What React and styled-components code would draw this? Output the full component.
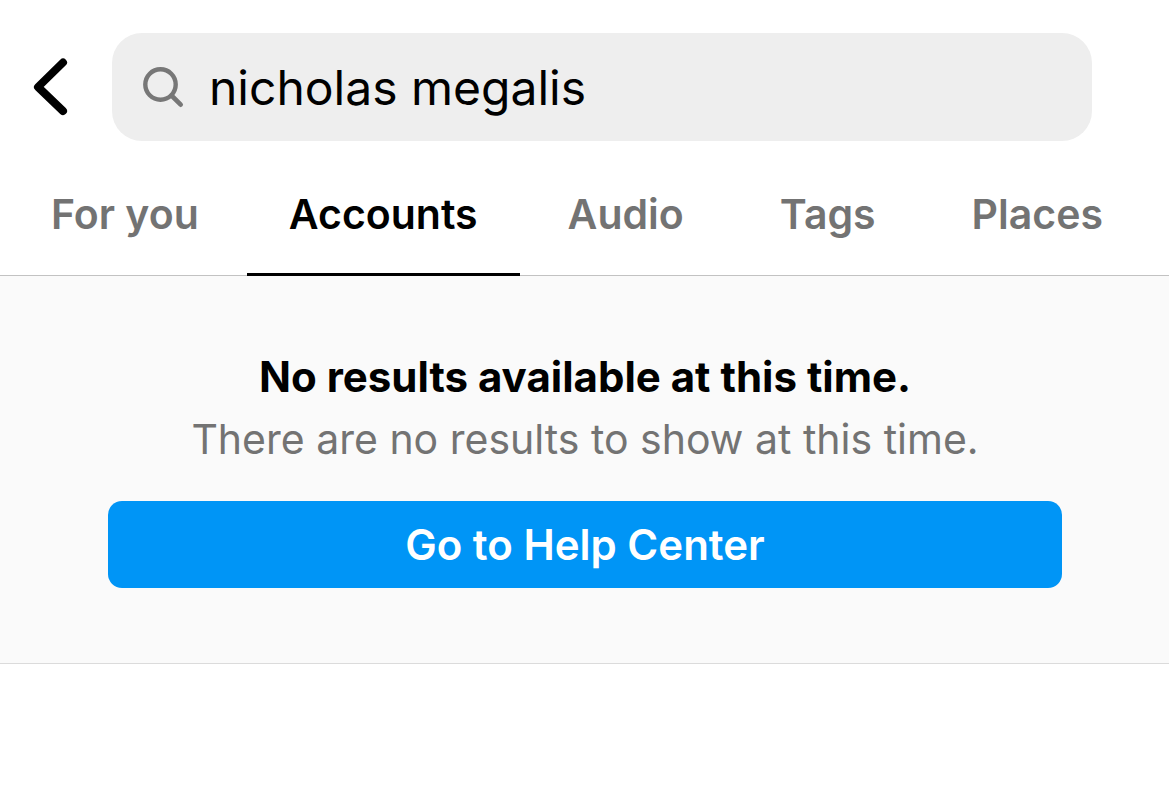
import { createGlobalStyle, styled } from 'styled-components';

const GlobalStyle = createGlobalStyle`
    *, *::before, *::after {
        box-sizing: border-box;
    }

    body {
        margin: 0;
        background: #fff;
        color: #000;
        font-family: Inter, 'Liberation Sans', sans-serif;
    }
`;

const Header = styled.header`
    display: flex;
    align-items: center;
    gap: 44px;
    padding: 33px 77px 0 32px;
`;

const BackButton = styled.button`
    flex: none;
    display: flex;
    padding: 0;
    border: 0;
    background: none;
    color: #000;
    cursor: pointer;
`;

const SearchBox = styled.label`
    flex: 1;
    min-width: 0;
    display: flex;
    align-items: center;
    gap: 24px;
    height: 108px;
    padding: 0 30px;
    border-radius: 30px;
    background: #eee;
    color: #777;
`;

const SearchInput = styled.input`
    flex: 1;
    min-width: 0;
    padding: 2px 0 0;
    border: 0;
    outline: 0;
    background: none;
    color: #000;
    font-family: inherit;
    font-size: 48px;
    line-height: 60px;
`;

const Tabs = styled.nav`
    display: flex;
    height: 135px;
    padding-left: 3px;
    box-shadow: inset 0 -1px #c2c2c2;
    overflow: hidden;
`;

const Tab = styled.button`
    flex: none;
    padding: 10px ${({ $active }) => ($active ? '42px' : '48px')} 0;
    border: 0;
    background: none;
    box-shadow: ${({ $active }) => ($active ? 'inset 0 -3px #000' : 'none')};
    color: ${({ $active }) => ($active ? '#000' : '#737373')};
    font-family: inherit;
    font-size: 41px;
    font-weight: 600;
    cursor: pointer;
`;

const Empty = styled.section`
    display: flex;
    flex-direction: column;
    padding: 69px 107px 75px 108px;
    border-bottom: 1px solid #dbdbdb;
    background: #fafafa;
    text-align: center;
`;

const EmptyTitle = styled.h1`
    margin: 0;
    font-size: 42px;
    font-weight: 700;
    line-height: 63px;
`;

const EmptyText = styled.p`
    margin: 0 0 30px;
    color: #737373;
    font-size: 41px;
    line-height: 63px;
`;

const HelpLink = styled.a`
    border-radius: 14px;
    background: #0095f6;
    color: #fff;
    font-size: 42px;
    font-weight: 600;
    line-height: 87px;
    text-decoration: none;
`;

const BackIcon = () => (
    <svg width="36" height="58" viewBox="0 0 36 58" fill="none" aria-hidden="true">
        <path
            d="M31 4.5 6 29l25 24"
            stroke="currentColor"
            strokeWidth="8"
            strokeLinecap="round"
            strokeLinejoin="round"
        />
    </svg>
);

const SearchIcon = () => (
    <svg width="43" height="44" viewBox="0 0 43 44" fill="none" aria-hidden="true">
        <circle cx="18.5" cy="19.5" r="15.2" stroke="currentColor" strokeWidth="4.4" />
        <path d="m29.5 30.5 9.2 9.2" stroke="currentColor" strokeWidth="4.6" strokeLinecap="round" />
    </svg>
);

const tabs = ['For you', 'Accounts', 'Audio', 'Tags', 'Places'];

const App = () => (
    <>
        <GlobalStyle />
        <Header>
            <BackButton type="button" aria-label="Back">
                <BackIcon />
            </BackButton>
            <SearchBox>
                <SearchIcon />
                <SearchInput type="text" aria-label="Search" defaultValue="nicholas megalis" />
            </SearchBox>
        </Header>
        <Tabs>
            {tabs.map(tab => (
                <Tab key={tab} type="button" $active={tab === 'Accounts'}>
                    {tab}
                </Tab>
            ))}
        </Tabs>
        <Empty>
            <EmptyTitle>No results available at this time.</EmptyTitle>
            <EmptyText>There are no results to show at this time.</EmptyText>
            <HelpLink href="#help">Go to Help Center</HelpLink>
        </Empty>
    </>
);

export default App;
